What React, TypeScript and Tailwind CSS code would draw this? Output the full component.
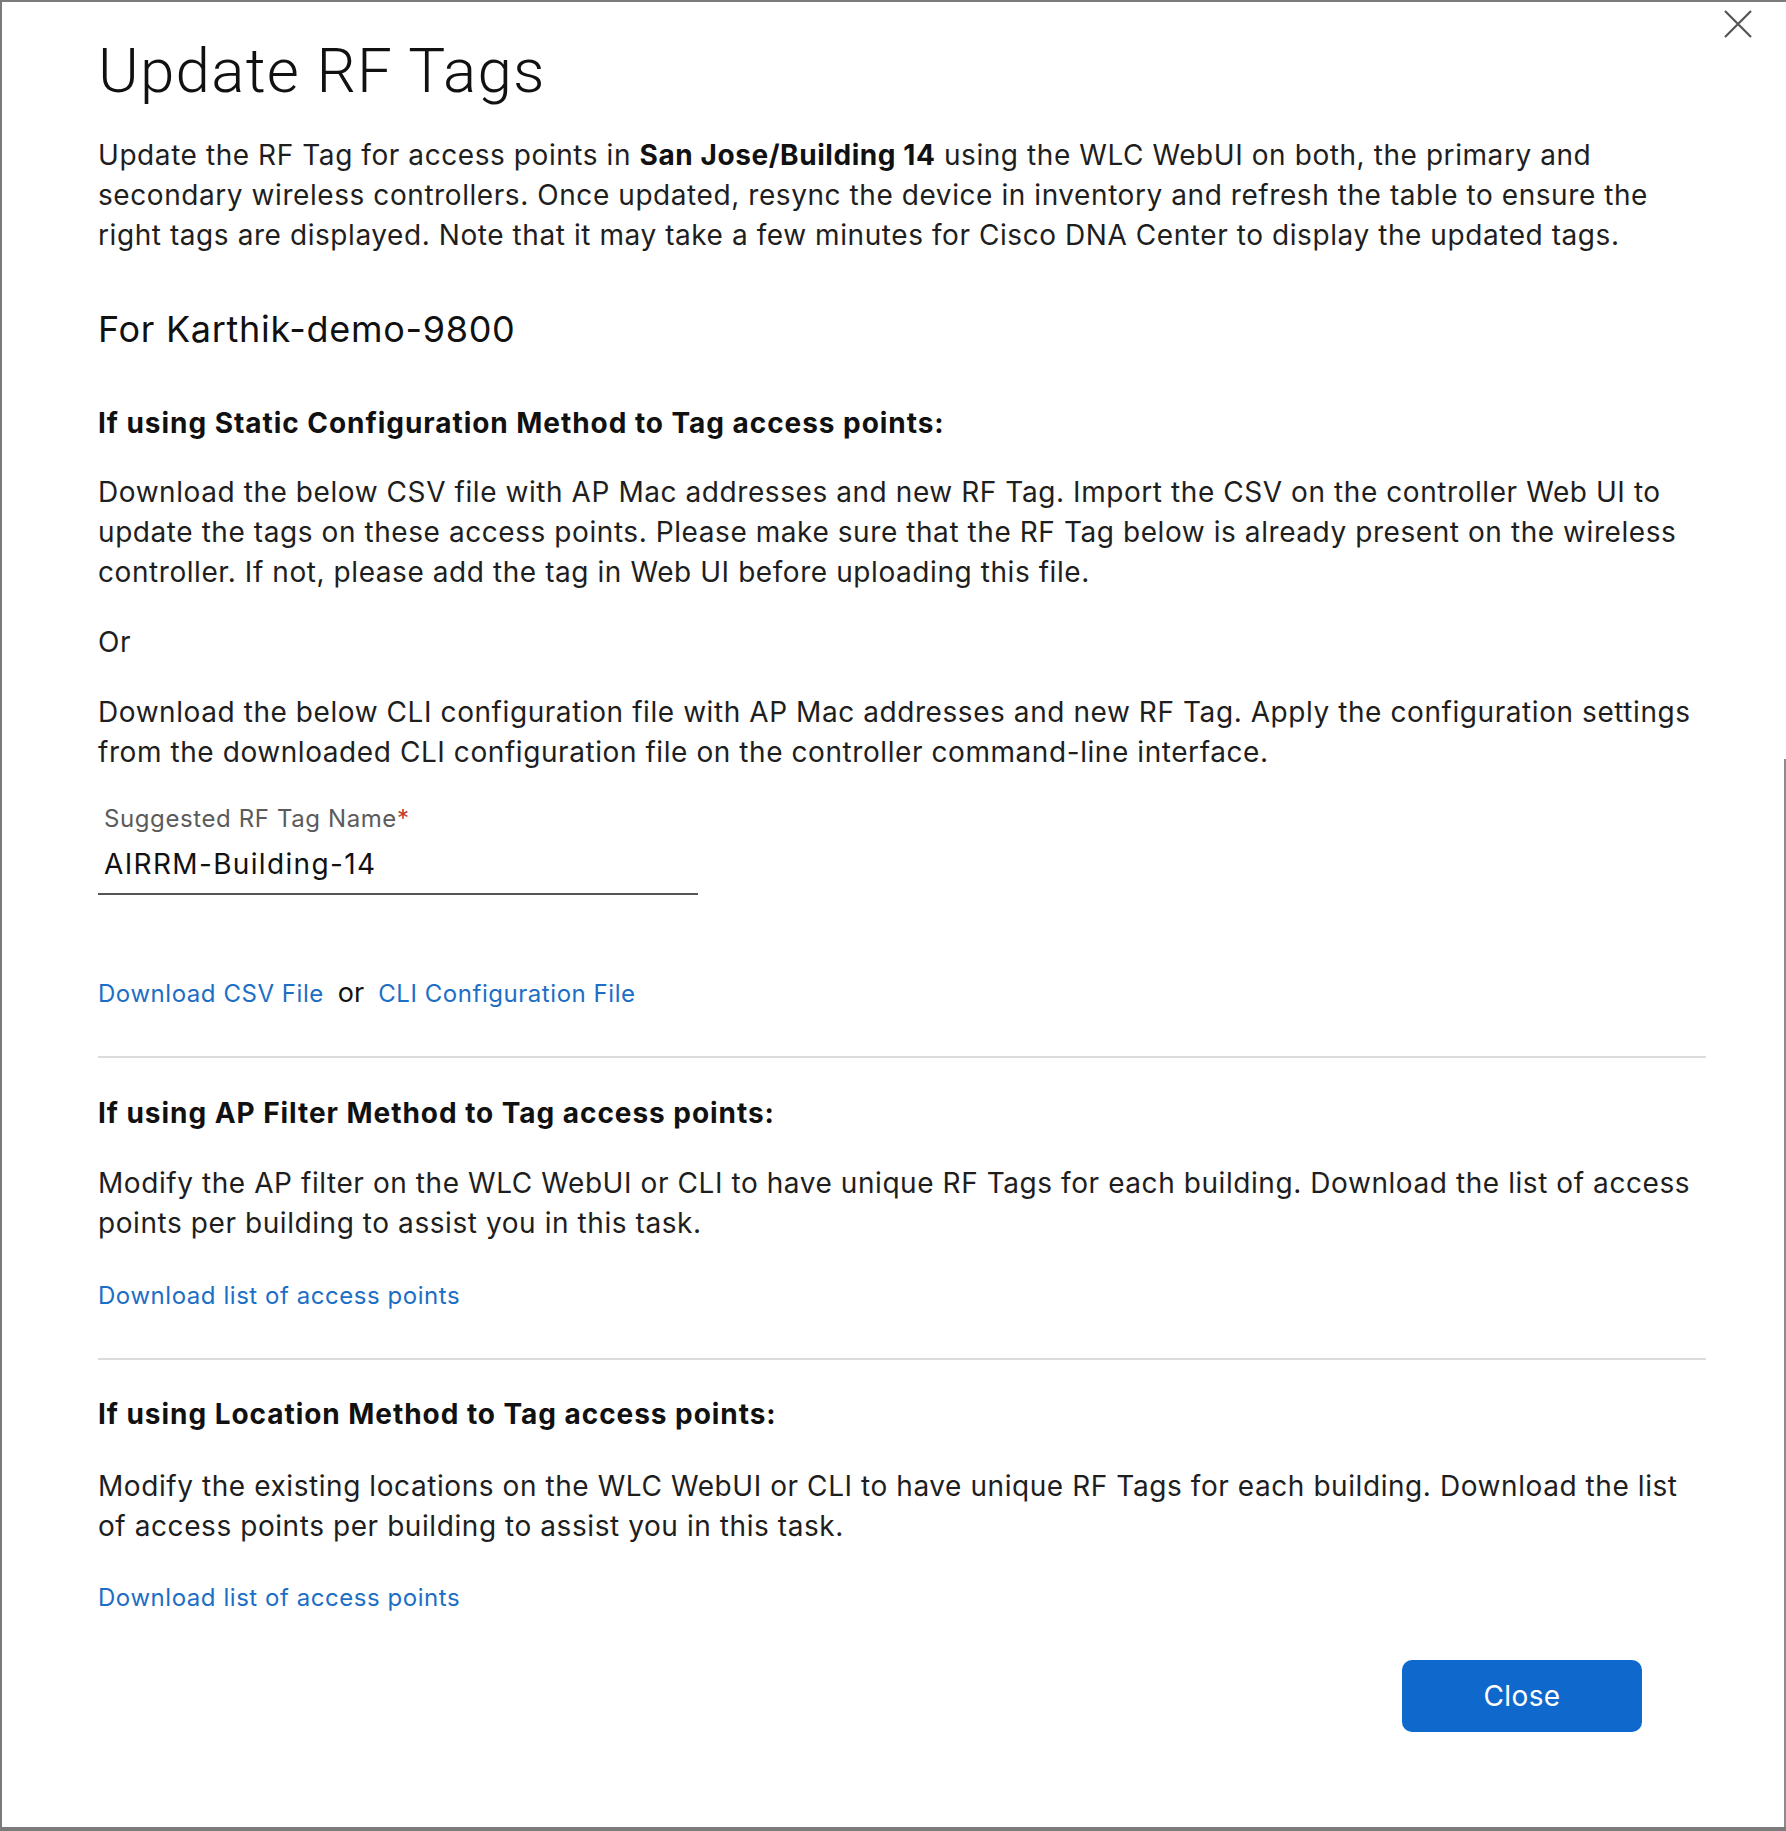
import React from "react";

const body = "font-['Inter',sans-serif] text-[28px] leading-[40px] tracking-[0.57px] text-[#1e1e1e] whitespace-nowrap";
const heading = "font-['Inter',sans-serif] text-[28px] leading-[40px] tracking-[0.95px] font-bold text-[#111111] whitespace-nowrap";
const link = "font-['Inter',sans-serif] text-[24px] leading-[32px] tracking-[0.55px] text-[#1d6ec5] whitespace-nowrap";

export default function App() {
  return (
    <div className="relative w-[1786px] h-[1831px] bg-white border-t-2 border-l-2 border-b-4 border-[#7b7b7b] overflow-hidden">
      <div className="absolute right-0 top-[757px] bottom-0 w-[2px] bg-[#8a8a8a]" />
      <button className="absolute left-[1722px] top-[8px] w-[28px] h-[28px]" aria-label="Close dialog">
        <svg width="28" height="28" viewBox="0 0 28 28" fill="none">
          <path d="M1 1 L27 27 M27 1 L1 27" stroke="#555555" strokeWidth="2.2" />
        </svg>
      </button>

      <div className="ml-[96px] w-[1608px] pt-[38px] flex flex-col">
        <h1 className="font-['Roboto',sans-serif] font-light text-[62px] leading-[62px] tracking-[1.2px] text-[#111111]">
          Update RF Tags
        </h1>

        <p className={`${body} mt-[33px]`}>
          Update the RF Tag for access points in <span className="font-bold text-[#111111]">San Jose/Building 14</span> using the WLC WebUI on both, the primary and
          <br />
          secondary wireless controllers. Once updated, resync the device in inventory and refresh the table to ensure the
          <br />
          right tags are displayed. Note that it may take a few minutes for Cisco DNA Center to display the updated tags.
        </p>

        <h2 className="font-['Inter',sans-serif] text-[36px] leading-[44px] tracking-[0.7px] text-[#111111] mt-[52px]">
          For Karthik-demo-9800
        </h2>

        <h3 className={`${heading} mt-[52px]`}>If using Static Configuration Method to Tag access points:</h3>

        <p className={`${body} mt-[29px]`}>
          Download the below CSV file with AP Mac addresses and new RF Tag. Import the CSV on the controller Web UI to
          <br />
          update the tags on these access points. Please make sure that the RF Tag below is already present on the wireless
          <br />
          controller. If not, please add the tag in Web UI before uploading this file.
        </p>

        <p className={`${body} mt-[30px]`}>Or</p>

        <p className={`${body} mt-[30px]`}>
          Download the below CLI configuration file with AP Mac addresses and new RF Tag. Apply the configuration settings
          <br />
          from the downloaded CLI configuration file on the controller command-line interface.
        </p>

        <div className="mt-[31px] w-[600px] flex flex-col border-b-2 border-[#555555] pb-[11px]">
          <label className="pl-[6px] font-['Inter',sans-serif] text-[24px] leading-[32px] tracking-[0.6px] text-[#5b5b5b]">
            Suggested RF Tag Name<span className="text-[#c0392b]">*</span>
          </label>
          <div className="pl-[6px] mt-[11px] font-['Inter',sans-serif] text-[28px] leading-[36px] tracking-[1.35px] text-[#111111]">
            AIRRM-Building-14
          </div>
        </div>

        <div className="mt-[82px] flex items-baseline gap-[14px]">
          <a className={link} href="#">Download CSV File</a>
          <span className="font-['Inter',sans-serif] text-[27px] leading-[32px] text-[#111111]">or</span>
          <a className={link} href="#">CLI Configuration File</a>
        </div>

        <div className="mt-[46px] h-[2px] bg-[#dcdcdc]" />

        <h3 className={`${heading} mt-[35px]`}>If using AP Filter Method to Tag access points:</h3>

        <p className={`${body} mt-[30px]`}>
          Modify the AP filter on the WLC WebUI or CLI to have unique RF Tags for each building. Download the list of access
          <br />
          points per building to assist you in this task.
        </p>

        <a className={`${link} mt-[37px] self-start`} href="#">Download list of access points</a>

        <div className="mt-[46px] h-[2px] bg-[#dcdcdc]" />

        <h3 className={`${heading} mt-[34px]`}>If using Location Method to Tag access points:</h3>

        <p className={`${body} mt-[32px]`}>
          Modify the existing locations on the WLC WebUI or CLI to have unique RF Tags for each building. Download the list
          <br />
          of access points per building to assist you in this task.
        </p>

        <a className={`${link} mt-[36px] self-start`} href="#">Download list of access points</a>

        <div className="mt-[46px] flex justify-end pr-[64px]">
          <button className="w-[240px] h-[72px] rounded-[10px] bg-[#0f69cc] text-white font-['Inter',sans-serif] text-[28px] leading-[32px] tracking-[0.4px]">
            Close
          </button>
        </div>
      </div>
    </div>
  );
}
